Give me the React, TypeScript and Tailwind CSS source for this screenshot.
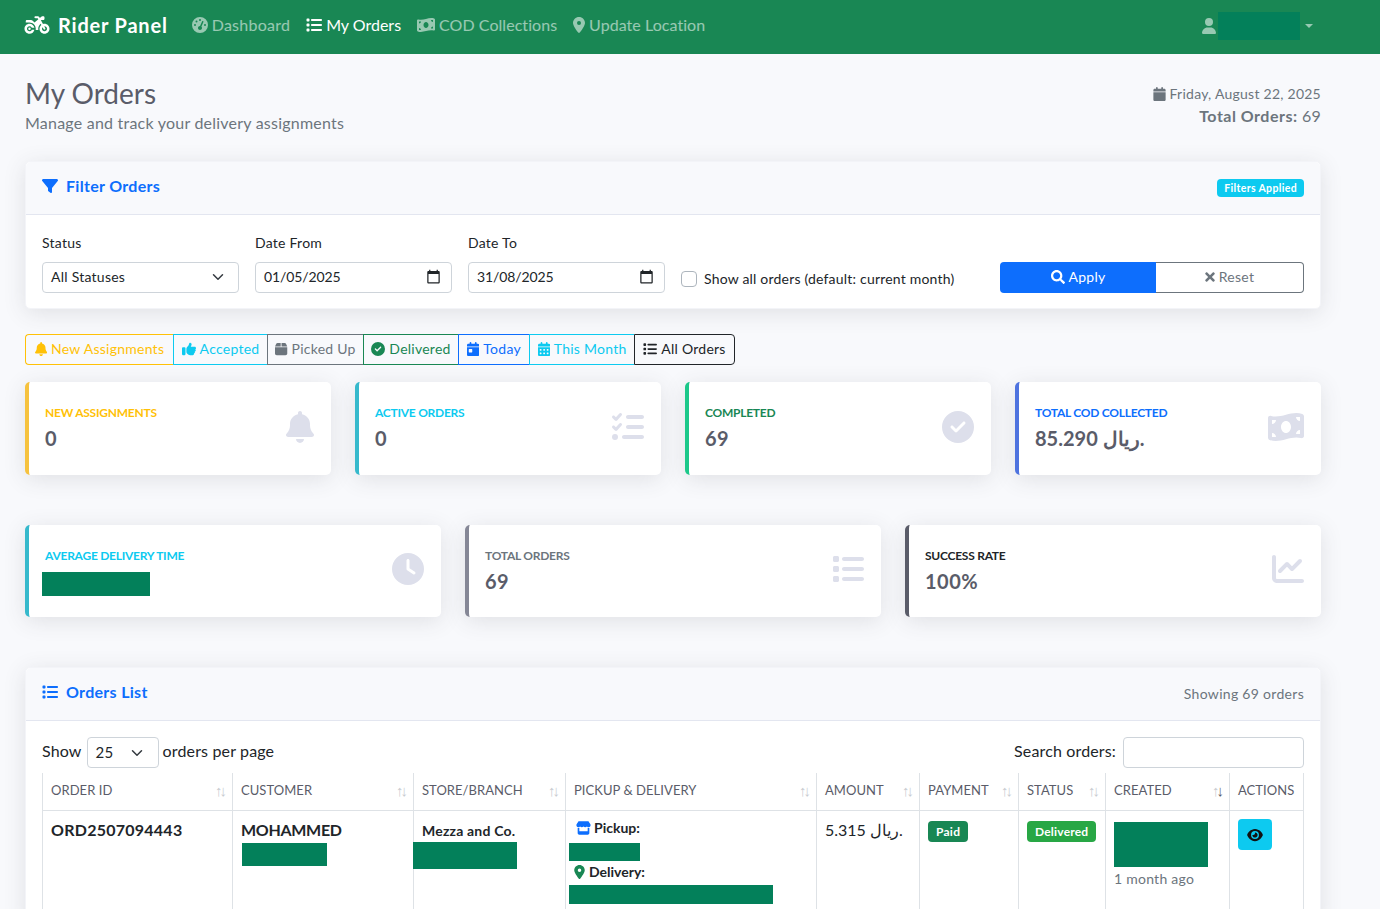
import type { ReactNode } from 'react';
import { FaSearch, FaTimes } from 'react-icons/fa';
import {
  FaBell,
  FaBox,
  FaCalendar,
  FaCalendarDay,
  FaCalendarDays,
  FaChartLine,
  FaCircleCheck,
  FaClock,
  FaEye,
  FaFilter,
  FaGaugeHigh,
  FaList,
  FaListCheck,
  FaLocationDot,
  FaMoneyBillWave,
  FaMotorcycle,
  FaStore,
  FaThumbsUp,
  FaUser,
} from 'react-icons/fa6';

function Hidden({ className }: { className: string }) {
  return <div className={`bg-[#03805a] ${className}`} />;
}

function NavItem({ icon, label, cls }: { icon: ReactNode; label: string; cls: string }) {
  return (
    <a className={`flex items-center gap-[4px] whitespace-nowrap ${cls}`}>
      {icon}
      {label}
    </a>
  );
}

function CalendarGlyph() {
  return (
    <svg viewBox="0 0 24 24" className="h-[15px] w-[15px] fill-[#212529]">
      <path d="M20 3h-1V1h-2v2H7V1H5v2H4c-1.1 0-2 .9-2 2v16c0 1.1.9 2 2 2h16c1.1 0 2-.9 2-2V5c0-1.1-.9-2-2-2zm0 18H4V8h16v13z" />
    </svg>
  );
}

function Chevron() {
  return (
    <svg viewBox="0 0 16 16" className="h-[12px] w-[12px] fill-none stroke-[#343a40] stroke-2">
      <path strokeLinecap="round" strokeLinejoin="round" d="m2 5 6 6 6-6" />
    </svg>
  );
}

function Field({ label, children }: { label: string; children: ReactNode }) {
  return (
    <div className="w-[197px] shrink-0">
      <div className="mb-[9px] h-[21px] text-[14px] leading-[21px] text-[#212529]">{label}</div>
      {children}
    </div>
  );
}

function DateBox({ value }: { value: string }) {
  return (
    <div className="flex h-[31px] items-center justify-between rounded-[4px] border border-[#ced4da] bg-white pb-[2px] pl-[8px] pr-[10px] text-[14px] tracking-[-0.1px] text-[#212529]">
      {value}
      <CalendarGlyph />
    </div>
  );
}

const quickFilters = [
  { label: 'New Assignments', icon: <FaBell className="h-[14px] w-[12.25px]" />, cls: 'border-[#ffc107] text-[#ffc107] w-[148px] rounded-l-[4px]' },
  { label: 'Accepted', icon: <FaThumbsUp className="h-[14px] w-[14px]" />, cls: 'border-[#0dcaf0] text-[#0dcaf0] w-[94px]' },
  { label: 'Picked Up', icon: <FaBox className="h-[14px] w-[12.25px]" />, cls: 'border-[#6c757d] text-[#6c757d] w-[96px]' },
  { label: 'Delivered', icon: <FaCircleCheck className="h-[14px] w-[14px]" />, cls: 'border-[#198754] text-[#198754] w-[95px]' },
  { label: 'Today', icon: <FaCalendarDay className="h-[14px] w-[12.25px]" />, cls: 'border-[#0d6efd] text-[#0d6efd] w-[71px]' },
  { label: 'This Month', icon: <FaCalendarDays className="h-[14px] w-[12.25px]" />, cls: 'border-[#0dcaf0] text-[#0dcaf0] w-[105px]' },
  { label: 'All Orders', icon: <FaList className="h-[14px] w-[14px]" />, cls: 'border-[#212529] text-[#212529] w-[101px] rounded-r-[4px] border-r' },
];

function StatCard({
  label,
  labelCls,
  barCls,
  icon,
  children,
}: {
  label: string;
  labelCls: string;
  barCls: string;
  icon: ReactNode;
  children: ReactNode;
}) {
  return (
    <div className={`flex items-center justify-between rounded-[5px] border-l-[4px] bg-white pl-[16px] pr-[17px] shadow-[0_4px_22px_rgba(58,59,69,0.13)] ${barCls}`}>
      <div className="min-w-0 pb-[3px]">
        <div className={`text-[12px] font-bold uppercase leading-[18px] tracking-[-0.25px] ${labelCls}`}>{label}</div>
        <div className="mt-[4px] h-[24px] text-[20px] font-bold leading-[24px] tracking-[0.5px] text-[#5a5c69]">{children}</div>
      </div>
      <div className="mb-[4px] text-[#dddfeb]">{icon}</div>
    </div>
  );
}

function Th({ label, strong }: { label: string; strong?: boolean }) {
  return (
    <th className="border-r border-b border-[#dee2e6] px-[8px] pb-[2px] text-left align-middle text-[13px] font-normal uppercase tracking-[0.05px] text-[#5a5c69]">
      <div className="flex items-center justify-between whitespace-nowrap">
        {label}
        <span className="font-['Liberation_Sans',sans-serif] text-[15px] leading-none tracking-[-3px] text-[#c9ccd1]">
          ↑<span className={strong ? 'text-[#5a5c69]' : ''}>↓</span>
        </span>
      </div>
    </th>
  );
}

export default function App() {
  return (
    <div className="h-[909px] overflow-hidden bg-[#f8f9fc] font-['Lato','Open_Sans',sans-serif] tracking-[0.25px] text-[#212529]">
      <nav className="flex h-[54px] items-center bg-[#198754] pb-[2px] pl-[24px] pr-[67px]">
        <a className="mb-[2px] mr-[24px] flex items-center gap-[8px] text-[20px] font-bold tracking-[0.8px] text-white">
          <FaMotorcycle className="h-[20px] w-[26px]" />
          Rider Panel
        </a>
        <div className="mb-[2px] flex items-center gap-[16px] text-[16px]">
          <NavItem cls="tracking-[0.25px] text-white/55" icon={<FaGaugeHigh className="h-[16px] w-[16px]" />} label="Dashboard" />
          <NavItem cls="tracking-normal text-white" icon={<FaList className="h-[16px] w-[16px]" />} label="My Orders" />
          <NavItem cls="tracking-[0.05px] text-white/55" icon={<FaMoneyBillWave className="h-[16px] w-[18px]" />} label="COD Collections" />
          <NavItem cls="tracking-[0.05px] text-white/55" icon={<FaLocationDot className="h-[16px] w-[12px]" />} label="Update Location" />
        </div>
        <div className="ml-auto flex items-center text-white/55">
          <FaUser className="mr-[2px] h-[16px] w-[14px]" />
          <Hidden className="h-[28px] w-[82px]" />
          <span className="ml-[5px] h-0 w-0 border-x-[4px] border-t-[4px] border-x-transparent border-t-white/55" />
        </div>
      </nav>

      <main className="pl-[25px] pr-[59px]">
        <header className="flex h-[107px] items-start justify-between pt-[22px]">
          <div>
            <h1 className="text-[28px] font-normal leading-[34px] tracking-normal text-[#5a5c69]">My Orders</h1>
            <p className="mt-[1px] text-[16px] leading-[24px] tracking-[0.22px] text-[#6c757d]">Manage and track your delivery assignments</p>
          </div>
          <div className="pt-[7px] text-right text-[#6c757d]">
            <div className="flex items-center justify-end gap-[4px] text-[14px] leading-[21px]">
              <FaCalendar className="h-[14px] w-[13px]" />
              Friday, August 22, 2025
            </div>
            <div className="text-[16px] leading-[24px]">
              <strong className="font-bold tracking-[0.5px]">Total Orders:</strong> 69
            </div>
          </div>
        </header>

        <section className="rounded-[5px] border border-[#f3f4f8] bg-white shadow-[0_4px_22px_rgba(58,59,69,0.13)]">
          <div className="flex h-[53px] items-center justify-between rounded-t-[5px] border-b border-[#e3e6f0] bg-[#f8f9fc] px-[16px]">
            <h2 className="mb-[4px] flex items-center gap-[8px] text-[16px] font-bold tracking-[0.3px] text-[#0d6efd]">
              <FaFilter className="h-[16px] w-[16px]" />
              Filter Orders
            </h2>
            <span className="rounded-[4px] bg-[#0dcaf0] px-[7px] py-[3px] text-[10.5px] font-bold leading-[12px] tracking-[0.35px] text-white">Filters Applied</span>
          </div>
          <div className="flex h-[93px] items-start gap-[16px] px-[16px] pt-[17px]">
            <Field label="Status">
              <div className="flex h-[31px] items-center justify-between rounded-[4px] border border-[#ced4da] bg-white pb-[2px] pl-[8px] pr-[14px] text-[14px]">
                All Statuses
                <Chevron />
              </div>
            </Field>
            <Field label="Date From">
              <DateBox value="01/05/2025" />
            </Field>
            <Field label="Date To">
              <DateBox value="31/08/2025" />
            </Field>
            <label className="mt-[30px] flex h-[31px] w-[303px] shrink-0 items-center gap-[7px] pt-[2px] text-[14px] tracking-[0.2px]">
              <span className="h-[16px] w-[16px] rounded-[4px] border border-[#adb5bd] bg-white" />
              Show all orders (default: current month)
            </label>
            <div className="mt-[30px] flex h-[31px] w-[304px] shrink-0 text-[14px]">
              <button className="flex w-[156px] items-center justify-center gap-[4px] rounded-l-[4px] bg-[#0d6efd] pb-[2px] text-white">
                <FaSearch className="h-[14px] w-[14px]" />
                Apply
              </button>
              <button className="flex flex-1 items-center justify-center gap-[4px] rounded-r-[4px] border border-l-0 border-[#6c757d] pb-[2px] text-[#6c757d]">
                <FaTimes className="h-[14px] w-[10px]" />
                Reset
              </button>
            </div>
          </div>
        </section>

        <div className="mt-[25px] flex h-[31px] text-[14px]">
          {quickFilters.map((f) => (
            <button key={f.label} className={`flex items-center justify-center gap-[4px] whitespace-nowrap border-y border-l pb-[2px] ${f.cls}`}>
              {f.icon}
              {f.label}
            </button>
          ))}
        </div>

        <div className="mt-[17px] grid h-[93px] grid-cols-4 gap-[24px]">
          <StatCard label="New Assignments" labelCls="text-[#ffc107]" barCls="border-[#f6c23e]" icon={<FaBell className="h-[32px] w-[28px]" />}>0</StatCard>
          <StatCard label="Active Orders" labelCls="text-[#0dcaf0]" barCls="border-[#36b9cc]" icon={<FaListCheck className="h-[32px] w-[32px]" />}>0</StatCard>
          <StatCard label="Completed" labelCls="text-[#198754]" barCls="border-[#1cc88a]" icon={<FaCircleCheck className="h-[32px] w-[32px]" />}>69</StatCard>
          <StatCard label="Total COD Collected" labelCls="text-[#0d6efd]" barCls="border-[#4e73df]" icon={<FaMoneyBillWave className="h-[32px] w-[36px]" />}>85.290 ريال.</StatCard>
        </div>

        <div className="mt-[50px] grid h-[92px] grid-cols-3 gap-[24px]">
          <StatCard label="Average Delivery Time" labelCls="text-[#0dcaf0]" barCls="border-[#36b9cc]" icon={<FaClock className="h-[32px] w-[32px]" />}>
            <Hidden className="-ml-[3px] h-[24px] w-[108px] translate-y-[3px]" />
          </StatCard>
          <StatCard label="Total Orders" labelCls="text-[#6c757d]" barCls="border-[#858796]" icon={<FaList className="h-[32px] w-[32px]" />}>69</StatCard>
          <StatCard label="Success Rate" labelCls="text-[#212529]" barCls="border-[#5a5c69]" icon={<FaChartLine className="h-[32px] w-[32px]" />}>100%</StatCard>
        </div>

        <section className="mt-[50px] rounded-[5px] border border-[#f3f4f8] bg-white shadow-[0_4px_22px_rgba(58,59,69,0.13)]">
          <div className="flex h-[53px] items-center justify-between rounded-t-[5px] border-b border-[#e3e6f0] bg-[#f8f9fc] px-[16px]">
            <h2 className="mb-[4px] flex items-center gap-[8px] text-[16px] font-bold tracking-[0.3px] text-[#0d6efd]">
              <FaList className="h-[16px] w-[16px]" />
              Orders List
            </h2>
            <span className="mb-[2px] text-[14px] tracking-[0.3px] text-[#6c757d]">Showing 69 orders</span>
          </div>
          <div className="px-[16px] pt-[16px]">
            <div className="flex h-[36px] items-start justify-between text-[16px] tracking-[0.15px]">
              <div className="flex h-[31px] items-center">
                <span className="mb-[3px] mr-[5px]">Show</span>
                <div className="flex h-[31px] w-[72px] items-center justify-between rounded-[4px] border border-[#ced4da] pl-[8px] pr-[15px] text-[15px]">
                  25
                  <Chevron />
                </div>
                <span className="mb-[3px] ml-[4px]">orders per page</span>
              </div>
              <div className="flex h-[31px] items-center gap-[7px]">
                <span className="mb-[3px]">Search orders:</span>
                <div className="h-[31px] w-[181px] rounded-[4px] border border-[#ced4da]" />
              </div>
            </div>
            <table className="w-[1262px] table-fixed border-separate border-spacing-0 border-l border-[#dee2e6] text-[14px]">
              <colgroup>
                <col className="w-[190px]" />
                <col className="w-[181px]" />
                <col className="w-[152px]" />
                <col className="w-[251px]" />
                <col className="w-[103px]" />
                <col className="w-[99px]" />
                <col className="w-[87px]" />
                <col className="w-[124px]" />
                <col className="w-[74px]" />
              </colgroup>
              <thead>
                <tr className="h-[38px]">
                  <Th label="Order ID" />
                  <Th label="Customer" />
                  <Th label="Store/Branch" />
                  <Th label="Pickup & Delivery" />
                  <Th label="Amount" />
                  <Th label="Payment" />
                  <Th label="Status" />
                  <Th label="Created" strong />
                  <th className="border-r border-b border-[#dee2e6] px-[8px] pb-[2px] text-left align-middle text-[13px] font-normal uppercase tracking-[0.05px] text-[#5a5c69]">Actions</th>
                </tr>
              </thead>
              <tbody>
                <tr className="h-[110px] align-top">
                  <td className="border-r border-[#dee2e6] px-[8px] pt-[7px] text-[16px] font-bold leading-[24px]">ORD2507094443</td>
                  <td className="border-r border-[#dee2e6] px-[8px] pt-[7px] text-[16px] font-bold leading-[24px] tracking-[-0.3px]">
                    MOHAMMED
                    <Hidden className="ml-[1px] mt-[1px] h-[23px] w-[85px]" />
                  </td>
                  <td className="border-r border-[#dee2e6] pt-[9px] text-[14px] font-bold leading-[21px] tracking-[0.2px]">
                    <div className="pl-[8px]">Mezza and Co.</div>
                    <Hidden className="mt-[1px] h-[27px] w-[104px] -translate-x-[1px]" />
                  </td>
                  <td className="border-r border-[#dee2e6] pt-[6px] text-[14px] font-bold leading-[21px] tracking-normal">
                    <div className="flex items-center gap-[3px] pl-[10px]"><FaStore className="h-[14px] w-[15px] text-[#0d6efd]" />Pickup:</div>
                    <Hidden className="ml-[3px] mt-[5px] h-[18px] w-[71px]" />
                    <div className="flex items-center gap-[4px] pl-[8px]"><FaLocationDot className="h-[14px] w-[11px] text-[#198754]" />Delivery:</div>
                    <Hidden className="ml-[3px] mt-[3px] h-[19px] w-[204px]" />
                  </td>
                  <td className="border-r border-[#dee2e6] px-[8px] pt-[7px] text-[16px] leading-[24px]">5.315 ريال.</td>
                  <td className="border-r border-[#dee2e6] px-[8px] pt-[9px]">
                    <span className="inline-block rounded-[4px] bg-[#198754] px-[8px] py-[3px] text-[12px] font-bold leading-[15px] text-white">Paid</span>
                  </td>
                  <td className="border-r border-[#dee2e6] px-[8px] pt-[9px]">
                    <span className="inline-block rounded-[4px] bg-[#28a745] px-[8px] py-[3px] text-[12px] font-bold leading-[15px] tracking-[0.2px] text-white">Delivered</span>
                  </td>
                  <td className="border-r border-[#dee2e6] px-[8px] pt-[11px] text-[14px] text-[#6c757d]">
                    <Hidden className="h-[45px] w-[94px]" />
                    <div className="mt-[1px] leading-[21px]">1 month ago</div>
                  </td>
                  <td className="border-r border-[#dee2e6] px-[8px] pt-[8px]">
                    <button className="flex h-[31px] w-[34px] items-center justify-center rounded-[4px] bg-[#0dcaf0] text-[#111]">
                      <FaEye className="h-[14px] w-[16px]" />
                    </button>
                  </td>
                </tr>
              </tbody>
            </table>
          </div>
        </section>
      </main>
    </div>
  );
}
